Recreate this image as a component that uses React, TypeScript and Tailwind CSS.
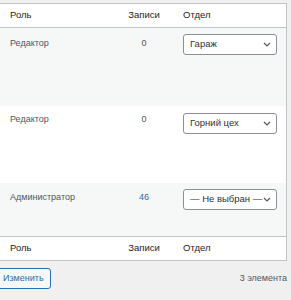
type Row = {
  role: string;
  count: string;
  linked: boolean;
  dept: string;
  height: string;
  bg: string;
  textPad: string;
  selectPad: string;
};

const rows: Row[] = [
  { role: 'Редактор', count: '0', linked: false, dept: 'Гараж', height: 'h-[78px]', bg: 'bg-[#f6f7f7]', textPad: 'pt-[9px]', selectPad: 'pt-[6px]' },
  { role: 'Редактор', count: '0', linked: false, dept: 'Горний цех', height: 'h-[77px]', bg: 'bg-white', textPad: 'pt-[7px]', selectPad: 'pt-[7px]' },
  { role: 'Администратор', count: '46', linked: true, dept: '— Не выбран —', height: 'h-[53px]', bg: 'bg-[#f6f7f7]', textPad: 'pt-[8px]', selectPad: 'pt-[6px]' },
];

function Chevron() {
  return (
    <svg width="8" height="5" viewBox="0 0 8 5" className="shrink-0">
      <path d="M1 1 L4 4 L7 1" fill="none" stroke="#50575e" strokeWidth="1.2" />
    </svg>
  );
}

function DeptSelect({ value }: { value: string }) {
  return (
    <div className="flex h-[21px] w-[94px] items-center justify-between rounded-[3px] border border-[#8c8f94] bg-white pl-[6px] pr-[5px] text-[9.5px] text-[#2c3338]">
      <span className="whitespace-nowrap">{value}</span>
      <Chevron />
    </div>
  );
}

function HeadRow({ border }: { border: string }) {
  return (
    <div className={`flex h-[24px] items-center bg-white text-[9.5px] text-[#1d2327] ${border}`}>
      <div className="w-[116px] pl-[10px]">Роль</div>
      <div className="w-[56px] text-center">Записи</div>
      <div className="pl-[11px]">Отдел</div>
    </div>
  );
}

export default function App() {
  return (
    <div className="h-[300px] w-[291px] overflow-hidden bg-[#f0f0f1] pt-[3px] font-['Liberation_Sans',Arial,sans-serif]">
      <div className="w-[287px] border-y border-r border-[#c3c4c7]">
        <HeadRow border="border-b border-[#c3c4c7]" />
        {rows.map((row, i) => (
          <div key={i} className={`flex ${row.height} ${row.bg} text-[9px] text-[#50575e]`}>
            <div className={`w-[116px] pl-[10px] ${row.textPad}`}>{row.role}</div>
            <div className={`w-[56px] text-center ${row.textPad} ${row.linked ? 'text-[#2271b1]' : ''}`}>{row.count}</div>
            <div className={`pl-[11px] ${row.selectPad}`}>
              <DeptSelect value={row.dept} />
            </div>
          </div>
        ))}
        <HeadRow border="border-t border-[#c3c4c7]" />
      </div>
      <div className="mt-[7px] flex items-center justify-between pr-[4px]">
        <button className="-ml-[6px] h-[21px] rounded-[3px] border border-[#2271b1] bg-[#f6f7f7] pl-[8px] pr-[6px] text-[9px] text-[#2271b1]">
          Изменить
        </button>
        <span className="text-[9px] text-[#50575e]">3 элемента</span>
      </div>
    </div>
  );
}
